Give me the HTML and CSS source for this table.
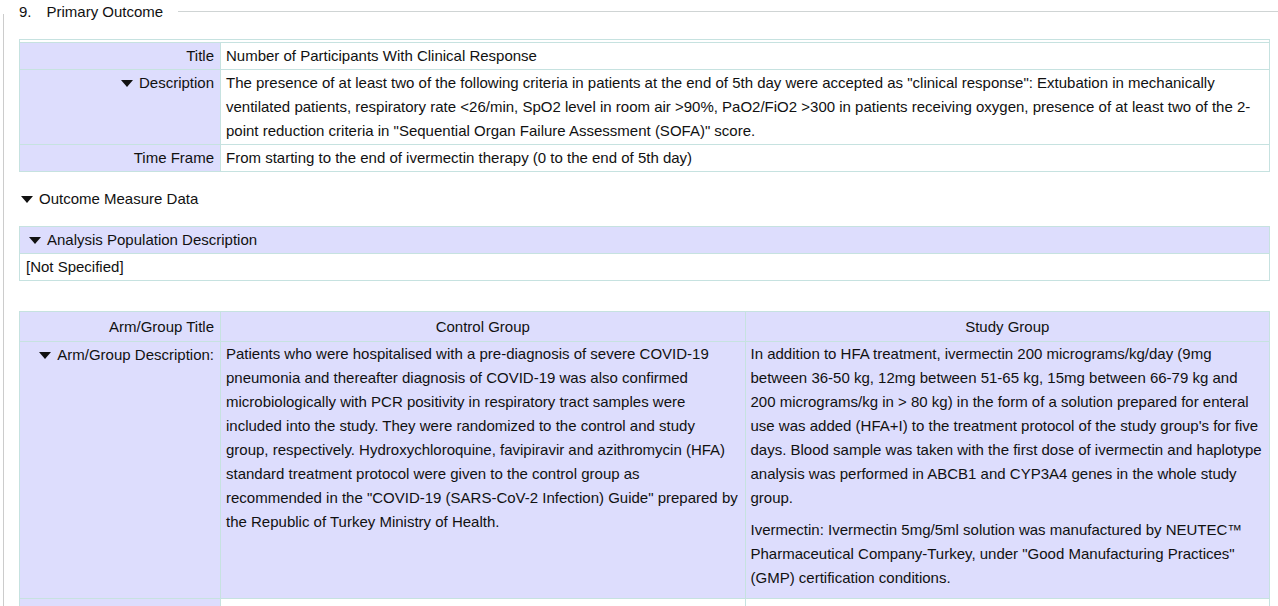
FILE: index.html
```html
<!DOCTYPE html>
<html>
<head>
<meta charset="utf-8">
<link rel="stylesheet" href="styles.css">
</head>
<body>
<div class="legend">
  <span class="num">9.</span><span class="legend-text">Primary Outcome</span><span class="legend-line"></span>
</div>
<div class="section">
  <table class="grid info">
    <tr class="spacer"><td colspan="2"></td></tr>
    <tr>
      <th class="label">Title</th>
      <td>Number of Participants With Clinical Response</td>
    </tr>
    <tr>
      <th class="label"><svg class="tri" width="12" height="7" viewBox="0 0 12 7"><polygon points="0,0 12,0 6,7"/></svg>Description</th>
      <td>The presence of at least two of the following criteria in patients at the end of 5th day were accepted as "clinical response": Extubation in mechanically ventilated patients, respiratory rate &lt;26/min, SpO2 level in room air &gt;90%, PaO2/FiO2 &gt;300 in patients receiving oxygen, presence of at least two of the 2-point reduction criteria in "Sequential Organ Failure Assessment (SOFA)" score.</td>
    </tr>
    <tr>
      <th class="label">Time Frame</th>
      <td>From starting to the end of ivermectin therapy (0 to the end of 5th day)</td>
    </tr>
  </table>

  <div class="toggle"><svg class="tri" width="12" height="7" viewBox="0 0 12 7"><polygon points="0,0 12,0 6,7"/></svg>Outcome Measure Data</div>

  <table class="grid pop">
    <tr><th class="pop-head"><svg class="tri" width="12" height="7" viewBox="0 0 12 7"><polygon points="0,0 12,0 6,7"/></svg>Analysis Population Description</th></tr>
    <tr><td>[Not Specified]</td></tr>
  </table>

  <table class="grid arms">
    <colgroup><col class="c-label"><col class="c-arm"><col class="c-arm"></colgroup>
    <tr class="head">
      <th class="label">Arm/Group Title</th>
      <th class="arm-title">Control Group</th>
      <th class="arm-title">Study Group</th>
    </tr>
    <tr class="desc">
      <th class="label top"><svg class="tri" width="12" height="7" viewBox="0 0 12 7"><polygon points="0,0 12,0 6,7"/></svg>Arm/Group Description:</th>
      <td><p>Patients who were hospitalised with a pre-diagnosis of severe COVID-19 pneumonia and thereafter diagnosis of COVID-19 was also confirmed microbiologically with PCR positivity in respiratory tract samples were included into the study. They were randomized to the control and study group, respectively. Hydroxychloroquine, favipiravir and azithromycin (HFA) standard treatment protocol were given to the control group as recommended in the "COVID-19 (SARS-CoV-2 Infection) Guide" prepared by the Republic of Turkey Ministry of Health.</p></td>
      <td><p>In addition to HFA treatment, ivermectin 200 micrograms/kg/day (9mg between 36-50 kg, 12mg between 51-65 kg, 15mg between 66-79 kg and 200 micrograms/kg in &gt; 80 kg) in the form of a solution prepared for enteral use was added (HFA+I) to the treatment protocol of the study group's for five days. Blood sample was taken with the first dose of ivermectin and haplotype analysis was performed in ABCB1 and CYP3A4 genes in the whole study group.</p><p>Ivermectin: Ivermectin 5mg/5ml solution was manufactured by NEUTEC™ Pharmaceutical Company-Turkey, under "Good Manufacturing Practices" (GMP) certification conditions.</p></td>
    </tr>
    <tr class="next">
      <th class="label">&nbsp;</th>
      <td>&nbsp;</td>
      <td>&nbsp;</td>
    </tr>
  </table>
</div>
</body>
</html>
```
FILE: styles.css
```css
html, body {
  margin: 0;
  padding: 0;
  background: #fff;
}
body {
  font-family: "Liberation Sans", Arial, sans-serif;
  font-size: 15px;
  line-height: 24px;
  color: #111;
}
.legend {
  display: flex;
  align-items: center;
  height: 24px;
  padding-left: 19px;
  margin-bottom: -10px;
}
.num {
  margin-right: 15px;
}
.legend-line {
  flex: 1;
  border-top: 1px solid #cfd4d4;
  margin-left: 15px;
  margin-top: -1px;
}
.section {
  margin-left: 3px;
  margin-right: 8px;
  border-left: 1px solid #cccccc;
  padding-left: 15px;
  padding-top: 25px;
  padding-bottom: 40px;
}
.grid {
  width: 100%;
  border-collapse: collapse;
  border: 1px solid #c6e2e0;
}
.grid th, .grid td {
  border: 1px solid #c6e2e0;
  font-weight: normal;
  padding: 1px 5px;
  vertical-align: top;
  text-align: left;
}
.spacer td {
  height: 2px;
  padding: 0;
  line-height: 0;
  font-size: 0;
}
.grid th.label {
  background: #ddddfd;
  text-align: right;
  width: 188px;
  white-space: nowrap;
  padding: 1px 6px;
}
.tri {
  display: inline-block;
  margin-right: 6px;
  vertical-align: 1px;
  fill: #111;
}
.toggle {
  margin: 15px 0 15px 2px;
}
.pop th.pop-head {
  background: #ddddfd;
  padding: 1px 6px 1px 9px;
}
.pop td {
  padding: 1px 6px;
}
.arms {
  margin-top: 30px;
  table-layout: fixed;
}
.c-label { width: 201px; }
.arms .head th,
.arms .head th.label {
  padding: 3px 6px 2px;
}
.arms th.arm-title {
  background: #ddddfd;
  text-align: center;
}
.arms .desc td {
  background: #ddddfd;
  padding: 0 6px 0 5px;
}
.arms p {
  margin: 0 0 8px 0;
}
.arms .next td {
  background: #fff;
  height: 40px;
}
```
